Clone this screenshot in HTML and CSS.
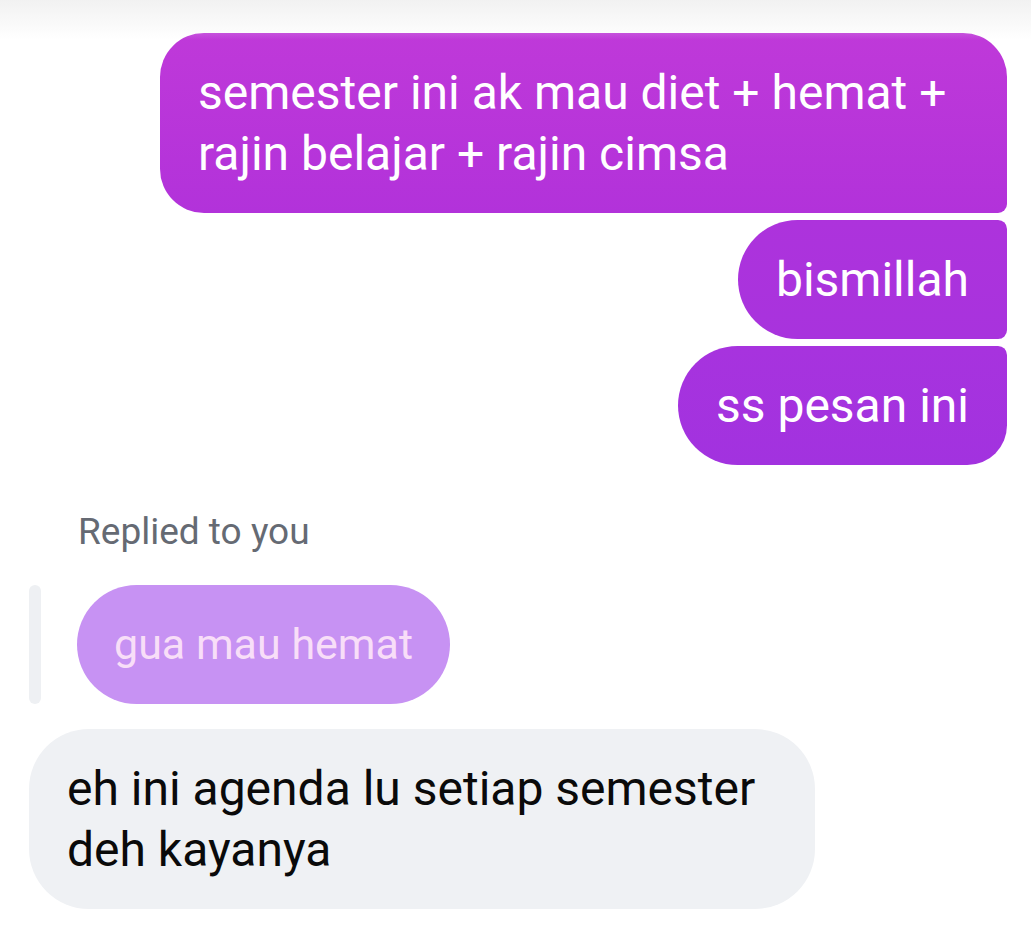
FILE: index.html
```html
<!DOCTYPE html>
<html lang="id">
<head>
<meta charset="utf-8">
<title>Chat</title>
<link rel="stylesheet" href="styles.css">
</head>
<body>
<div class="top-fade"></div>
<main class="chat">
  <div class="group outgoing">
    <div class="bubble out first">semester ini ak mau diet + hemat + rajin belajar + rajin cimsa</div>
    <div class="bubble out middle">bismillah</div>
    <div class="bubble out last">ss pesan ini</div>
  </div>

  <div class="reply-label">Replied to you</div>
  <div class="reply-row">
    <div class="reply-bar"></div>
    <div class="bubble quoted">gua mau hemat</div>
  </div>

  <div class="group incoming">
    <div class="bubble in">eh ini agenda lu setiap semester deh kayanya</div>
  </div>
</main>
</body>
</html>
```

FILE: styles.css
```css
* { box-sizing: border-box; }

html, body {
  margin: 0;
  padding: 0;
  background: #ffffff;
}

body {
  width: 1031px;
  height: 934px;
  overflow: hidden;
  font-family: Roboto, "Liberation Sans", sans-serif;
  -webkit-font-smoothing: antialiased;
}

.top-fade {
  position: absolute;
  left: 0;
  top: 0;
  width: 1031px;
  height: 40px;
  background: linear-gradient(to bottom, rgba(238,238,238,0.8), rgba(255,255,255,0));
  pointer-events: none;
  z-index: 2;
}

.chat {
  display: flex;
  flex-direction: column;
  padding: 33px 24px 0 29px;
}

.group {
  display: flex;
  flex-direction: column;
  gap: 7px;
}

.outgoing { align-items: flex-end; }
.incoming { align-items: flex-start; margin-top: 25px; }

.bubble {
  font-size: 48px;
  line-height: 61px;
  padding: 29px 38px;
}

.out {
  color: #ffffff;
  max-width: 847px;
}

.out.first {
  background: linear-gradient(to bottom, #bf39d9, #b232da);
  border-radius: 44px 44px 9px 44px;
  width: 847px;
}

.out.middle {
  background: linear-gradient(to bottom, #ad33dc, #a833dd);
  border-radius: 60px 9px 9px 60px;
}

.out.last {
  background: linear-gradient(to bottom, #a733de, #a232df);
  border-radius: 60px 9px 40px 60px;
}

.reply-label {
  margin: 47px 0 0 49px;
  font-size: 37px;
  line-height: 40px;
  color: #656a73;
}

.reply-row {
  display: flex;
  align-items: stretch;
  gap: 36px;
  margin-top: 33px;
}

.reply-bar {
  width: 12px;
  background: #eef0f3;
  border-radius: 6px;
}

.quoted {
  background: #c792f3;
  color: #f8def8;
  border-radius: 60px;
  padding: 29px 37px;
  font-size: 43px;
}

.in {
  background: #eff1f4;
  color: #0a0a0a;
  border-radius: 60px;
  max-width: 786px;
}
```
